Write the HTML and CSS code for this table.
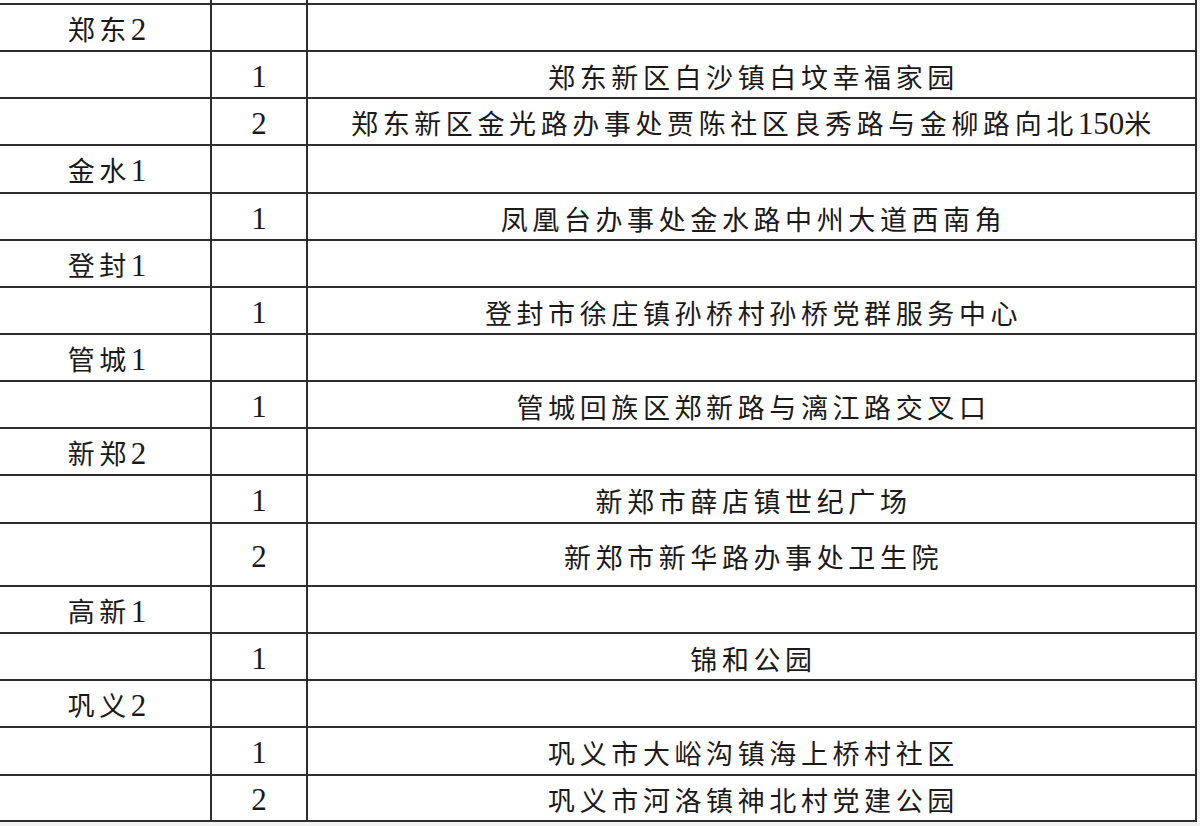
FILE: index.html
```html
<!DOCTYPE html>
<html lang="zh-CN">
<head>
<meta charset="utf-8">
<title>郑州核酸检测点</title>
<link rel="stylesheet" href="styles.css">
</head>
<body>
<table class="sheet">
  <colgroup>
    <col class="c-area">
    <col class="c-no">
    <col class="c-addr">
  </colgroup>
  <tbody>
    <tr class="h-cut"><td></td><td></td><td></td></tr>
    <tr class="h47"><td class="area">郑东<span class="d">2</span></td><td></td><td></td></tr>
    <tr class="h47"><td></td><td class="no">1</td><td class="addr">郑东新区白沙镇白坟幸福家园</td></tr>
    <tr class="h47"><td></td><td class="no">2</td><td class="addr">郑东新区金光路办事处贾陈社区良秀路与金柳路向北<span class="d">150</span>米</td></tr>
    <tr class="h48"><td class="area">金水<span class="d">1</span></td><td></td><td></td></tr>
    <tr class="h47"><td></td><td class="no">1</td><td class="addr">凤凰台办事处金水路中州大道西南角</td></tr>
    <tr class="h47"><td class="area">登封<span class="d">1</span></td><td></td><td></td></tr>
    <tr class="h47"><td></td><td class="no">1</td><td class="addr">登封市徐庄镇孙桥村孙桥党群服务中心</td></tr>
    <tr class="h47"><td class="area">管城<span class="d">1</span></td><td></td><td></td></tr>
    <tr class="h47"><td></td><td class="no">1</td><td class="addr">管城回族区郑新路与漓江路交叉口</td></tr>
    <tr class="h47"><td class="area">新郑<span class="d">2</span></td><td></td><td></td></tr>
    <tr class="h48"><td></td><td class="no">1</td><td class="addr">新郑市薛店镇世纪广场</td></tr>
    <tr class="h63"><td></td><td class="no">2</td><td class="addr">新郑市新华路办事处卫生院</td></tr>
    <tr class="h47"><td class="area">高新<span class="d">1</span></td><td></td><td></td></tr>
    <tr class="h47"><td></td><td class="no">1</td><td class="addr">锦和公园</td></tr>
    <tr class="h47"><td class="area">巩义<span class="d">2</span></td><td></td><td></td></tr>
    <tr class="h48"><td></td><td class="no">1</td><td class="addr">巩义市大峪沟镇海上桥村社区</td></tr>
    <tr class="h46"><td></td><td class="no">2</td><td class="addr">巩义市河洛镇神北村党建公园</td></tr>
  </tbody>
</table>
</body>
</html>
```

FILE: styles.css
```css
html, body {
  margin: 0;
  padding: 0;
  background: #f2f2f2;
}

.sheet {
  border-collapse: collapse;
  table-layout: fixed;
  width: 1196px;
  background: #fff;
  font-family: "Noto Sans CJK SC", "Liberation Serif", serif;
  font-size: 27px;
  color: #1a1a1a;
}

.c-area { width: 211px; }
.c-no { width: 96px; }
.c-addr { width: 889px; }

.sheet td {
  border: 2px solid #2e2e2e;
  padding: 0;
  text-align: center;
  vertical-align: middle;
  line-height: 1;
  white-space: nowrap;
}

.sheet td:first-child {
  border-left: none;
}

.h-cut td {
  border-top: none;
  height: 3px;
}

.h46 { height: 46px; }
.h47 { height: 47px; }
.h48 { height: 48px; }
.h63 { height: 63px; }

.area,
.addr {
  letter-spacing: 4.6px;
  padding-left: 4px !important;
  padding-top: 3px !important;
}

.no {
  font-family: "Liberation Serif", serif;
  font-size: 31px;
  padding-top: 3px !important;
}

.d {
  font-family: "Liberation Serif", serif;
  font-size: 31px;
  letter-spacing: 0;
}
```
